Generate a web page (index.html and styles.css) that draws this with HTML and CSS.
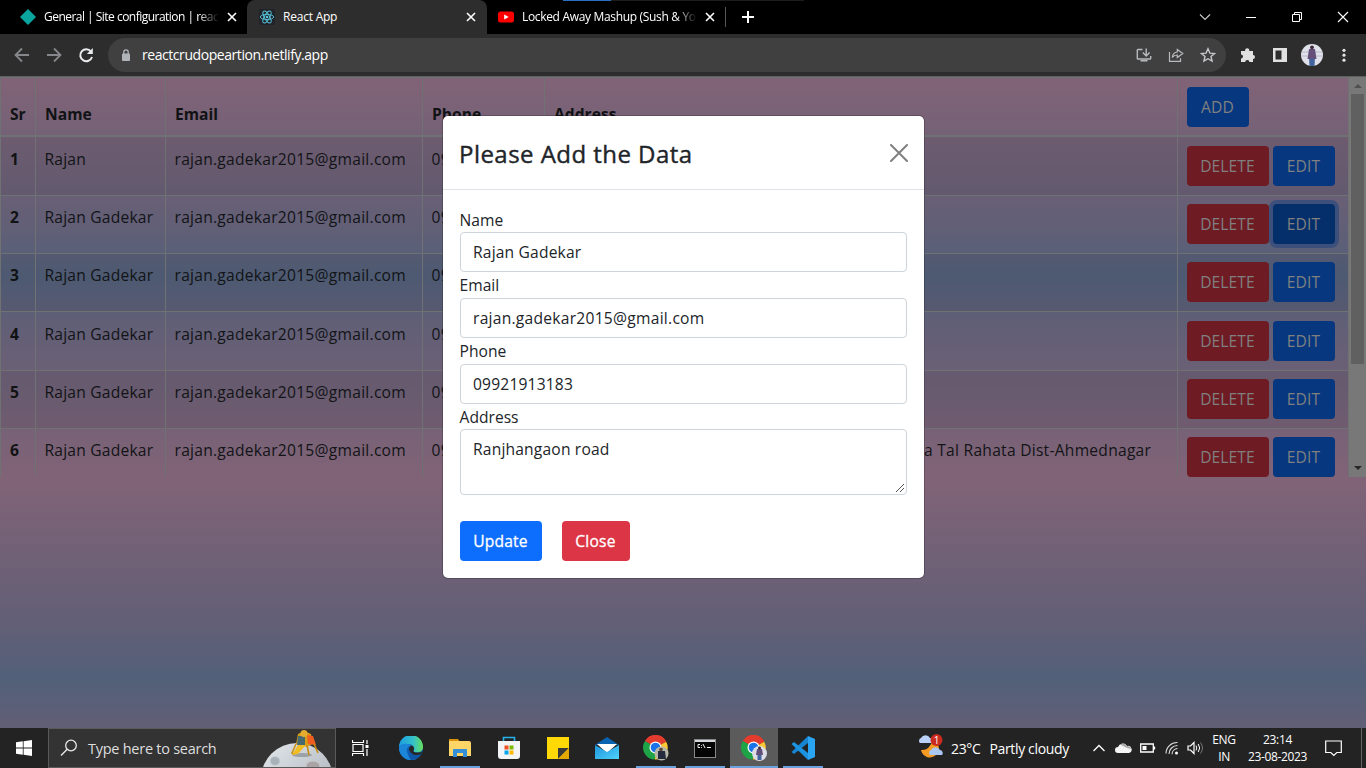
FILE: index.html
```html
<!DOCTYPE html>
<html lang="en">
<head>
<meta charset="utf-8">
<title>React App</title>
<link rel="stylesheet" href="styles.css">
</head>
<body>
<svg class="defs" width="0" height="0">
  <defs>
    <linearGradient id="edgeA" x1="0" y1="0" x2="1" y2="0"><stop offset="0" stop-color="#1b9de2"/><stop offset=".6" stop-color="#35c1c9"/><stop offset="1" stop-color="#66e05a"/></linearGradient>
    <linearGradient id="moon" x1="0" y1="0" x2="1" y2="1"><stop offset="0" stop-color="#e3e8ec"/><stop offset="1" stop-color="#a4abb3"/></linearGradient>
    <linearGradient id="mail" x1="0" y1="0" x2="1" y2="1"><stop offset="0" stop-color="#1d93dc"/><stop offset="1" stop-color="#4fd3fb"/></linearGradient>
  </defs>
  <symbol id="close" viewBox="0 0 10 10"><path d="M1 1l8 8M9 1l-8 8" fill="none" stroke="#fff" stroke-width="1.600"/></symbol>
  <symbol id="chrome" viewBox="0 0 28 26">
    <path d="M12.500 12.500L2 6A12 12 0 0 1 23.200 6.800z" fill="#e33b2e"/>
    <path d="M12.500 12.500L23.200 6.800A12 12 0 0 1 12 24.500z" fill="#fcc934"/>
    <path d="M12.500 12.500L12 24.500A12 12 0 0 1 2 6z" fill="#1ea446"/>
    <path d="M2 6A12 12 0 0 1 23.200 6.800L12.500 7z" fill="#e33b2e"/>
    <circle cx="12.500" cy="12.500" r="6" fill="#fff"/><circle cx="12.500" cy="12.500" r="4.800" fill="#1a73e8"/>
  </symbol>
</svg>

<header class="tabstrip">
  <div class="tab tab-first">
    <svg class="fav" viewBox="0 0 16 16"><path d="M8 0l8 8-8 8-8-8z" fill="#0ba5a0"/></svg>
    <span class="tab-title t1">General | Site configuration | reac</span>
    <svg class="x"><use href="#close"/></svg>
  </div>
  <div class="tab tab-active">
    <svg class="fav" viewBox="0 0 16 16"><rect width="16" height="16" rx="2" fill="#20232a"/><g fill="none" stroke="#58c4dc" stroke-width=".9"><ellipse cx="8" cy="8" rx="6.700" ry="2.600"/><ellipse cx="8" cy="8" rx="6.700" ry="2.600" transform="rotate(60 8 8)"/><ellipse cx="8" cy="8" rx="6.700" ry="2.600" transform="rotate(120 8 8)"/></g><circle cx="8" cy="8" r="1.300" fill="#58c4dc"/></svg>
    <span class="tab-title t2">React App</span>
    <svg class="x"><use href="#close"/></svg>
  </div>
  <div class="tab tab-last">
    <svg class="fav" viewBox="0 0 16 16"><rect y="2.500" width="16" height="11" rx="2.500" fill="#f00"/><path d="M6.200 5.500v5l4.500-2.500z" fill="#fff"/></svg>
    <span class="tab-title t3">Locked Away Mashup (Sush &amp; Yo</span>
    <svg class="x"><use href="#close"/></svg>
  </div>
  <i class="tab-sep"></i>
  <svg class="plus" viewBox="0 0 12 12"><path d="M6 0v12M0 6h12" stroke="#fff" stroke-width="2"/></svg>
  <div class="winctl">
    <svg viewBox="0 0 46 28"><path d="M18 11.500l5 5 5-5" fill="none" stroke="#ccc" stroke-width="1.100"/></svg>
    <svg viewBox="0 0 46 28"><path d="M18 14.500h10" stroke="#fff"/></svg>
    <svg viewBox="0 0 46 28"><path d="M18.500 11.500h7v7h-7zM20.500 11.500v-2h7v7h-2" fill="none" stroke="#fff"/></svg>
    <svg viewBox="0 0 46 28"><path d="M18 9l10 10M28 9L18 19" stroke="#fff" stroke-width="1.100"/></svg>
  </div>
</header>

<nav class="toolbar">
  <div class="navbtns">
    <svg viewBox="0 0 16 16"><path d="M15 8H2M8 1.500L1.500 8 8 14.500" fill="none" stroke="#85878a" stroke-width="1.800"/></svg>
    <svg viewBox="0 0 16 16"><path d="M1 8h13M8 1.500L14.500 8 8 14.500" fill="none" stroke="#85878a" stroke-width="1.800"/></svg>
    <svg viewBox="0 0 16 16"><path d="M13 4.500A6 6 0 1 0 14 10" fill="none" stroke="#e8eaed" stroke-width="2"/><path d="M14.800 1v6h-6z" fill="#e8eaed"/></svg>
  </div>
  <div class="omnibox">
    <svg class="lock" viewBox="0 0 10 12"><rect x="1" y="4.500" width="8" height="7.500" rx="1" fill="#b0b3b8"/><path d="M2.800 5V3a2.200 2.200 0 0 1 4.400 0v2" fill="none" stroke="#b0b3b8" stroke-width="1.300"/></svg>
    <span class="url">reactcrudopeartion.netlify.app</span>
    <div class="omni-icons">
      <svg viewBox="0 0 16 16"><path d="M6.500 2.500H2q-.700 0-.700.700v8q0 .800.700.800h12q.700 0 .700-.800V9M10.200 1.500v7M6.800 5.500l3.400 3.400 3.400-3.400M4.500 13.800h7" fill="none" stroke="#b8babd" stroke-width="1.400"/></svg>
      <svg viewBox="0 0 16 16"><path d="M1.500 5v9.300h11v-3M9.300 2.500l5.500 4-5.500 4V8Q6 8 4.300 10.500 4.800 5.500 9.300 5z" fill="none" stroke="#b8babd" stroke-width="1.200"/></svg>
      <svg viewBox="0 0 16 16"><path d="M8 1.800l1.900 4.300 4.600.4-3.500 3 1.100 4.600L8 11.700l-4.100 2.400L5 9.500l-3.500-3 4.600-.4z" fill="none" stroke="#c4c6c9" stroke-width="1.400"/></svg>
    </div>
  </div>
  <div class="right-icons">
    <svg viewBox="0 0 16 16"><path d="M1 4h4.200a2.100 2.100 0 1 1 4 0H13v4a2 2 0 1 1 0 4v3H9.400a2.100 2.100 0 0 0-4.200 0H1v-3.500a2 2 0 1 0 0-4z" fill="#e1e1e1"/></svg>
    <svg viewBox="0 0 16 16"><path d="M1 1h14v14H1zM3.500 3.500v9h6v-9z" fill="#e1e1e1" fill-rule="evenodd"/></svg>
    <svg class="avatar" viewBox="0 0 22 22"><circle cx="11" cy="11" r="11" fill="#dfe0ea"/><path d="M1 8h20M0 12h22" stroke="#b8bac8"/><path d="M8 14h6l-.5 8h-5z" fill="#42639b"/><path d="M8 5h6l1.500 10h-9z" fill="#674f7b"/><circle cx="11" cy="3.300" r="1.900" fill="#3b2c38"/></svg>
    <svg viewBox="0 0 16 16"><g fill="#e1e1e1"><circle cx="8" cy="3.300" r="1.600"/><circle cx="8" cy="8.200" r="1.600"/><circle cx="8" cy="13.200" r="1.600"/></g></svg>
  </div>
</nav>

<main class="page">
  <section class="scroller">
    <div class="table">
      <div class="row head"><b>Sr</b><b>Name</b><b>Email</b><b>Phone</b><b>Address</b><div class="actions"><button class="btn blue">ADD</button></div></div>
      <div class="row odd first"><b>1</b><span>Rajan</span><span class="mail">rajan.gadekar2015@gmail.com</span><span>09921913183</span><span></span><div class="actions"><button class="btn red">DELETE</button><button class="btn blue">EDIT</button></div></div>
      <div class="row"><b>2</b><span>Rajan Gadekar</span><span class="mail">rajan.gadekar2015@gmail.com</span><span>09921913183</span><span></span><div class="actions"><button class="btn red">DELETE</button><button class="btn blue focused">EDIT</button></div></div>
      <div class="row odd"><b>3</b><span>Rajan Gadekar</span><span class="mail">rajan.gadekar2015@gmail.com</span><span>09921913183</span><span></span><div class="actions"><button class="btn red">DELETE</button><button class="btn blue">EDIT</button></div></div>
      <div class="row"><b>4</b><span>Rajan Gadekar</span><span class="mail">rajan.gadekar2015@gmail.com</span><span>09921913183</span><span></span><div class="actions"><button class="btn red">DELETE</button><button class="btn blue">EDIT</button></div></div>
      <div class="row odd"><b>5</b><span>Rajan Gadekar</span><span class="mail">rajan.gadekar2015@gmail.com</span><span>09921913183</span><span></span><div class="actions"><button class="btn red">DELETE</button><button class="btn blue">EDIT</button></div></div>
      <div class="row"><b>6</b><span>Rajan Gadekar</span><span class="mail">rajan.gadekar2015@gmail.com</span><span>09921913183</span><span class="addr">a Tal Rahata Dist-Ahmednagar</span><div class="actions"><button class="btn red">DELETE</button><button class="btn blue">EDIT</button></div></div>
    </div>
    <div class="scrollbar"><i class="up"></i><i class="thumb"></i><i class="down"></i></div>
  </section>

  <form class="modal">
    <div class="modal-head"><h4>Please Add the Data</h4>
      <svg viewBox="0 0 18 18"><path d="M1 1l16 16M17 1L1 17" stroke="#808080" stroke-width="2" stroke-linecap="round"/></svg>
    </div>
    <div class="modal-body">
      <label class="tight">Name</label><div class="input">Rajan Gadekar</div>
      <label>Email</label><div class="input mail">rajan.gadekar2015@gmail.com</div>
      <label>Phone</label><div class="input">09921913183</div>
      <label class="tight">Address</label><div class="input area">Ranjhangaon road<svg viewBox="0 0 10 10"><path d="M1 9L9 1M5 9l4-4" stroke="#555" stroke-width="1"/></svg></div>
      <div class="modal-btns"><button type="button" class="update">Update</button><button type="button" class="shut">Close</button></div>
    </div>
  </form>
</main>

<footer class="taskbar">
  <div class="start"><svg viewBox="0 0 16 16"><path d="M0 2.300l6.800-1v6.300H0zM7.600 1.200L16 0v7.600H7.600zM0 8.400h6.800v6.300l-6.800-1zM7.600 8.400H16V16l-8.400-1.200z" fill="#fff"/></svg></div>
  <div class="search">
    <svg class="mag" viewBox="0 0 18 18"><circle cx="11" cy="6.500" r="5.300" fill="none" stroke="#e8e8e8" stroke-width="1.300"/><path d="M7.200 10.300L1 16.500" stroke="#e8e8e8" stroke-width="1.400"/></svg>
    <span>Type here to search</span>
    <svg class="moon" viewBox="0 0 70 38"><circle cx="35" cy="50" r="36" fill="url(#moon)"/><ellipse cx="13" cy="32" rx="5" ry="4.500" fill="#a9b1b9" stroke="#cdd3d8"/><ellipse cx="51" cy="37" rx="7" ry="5" fill="#a9a3a5" stroke="#c9cacd"/><ellipse cx="40" cy="26" rx="10" ry="2" fill="#9ba1a7"/><path d="M36 5l6-3 7 3 1 10-5 3-11-3z" fill="#d99c17"/><path d="M36 7h7v9h-8z" fill="#466a6e"/><path d="M45 6l6 1 3 9-8-1z" fill="#ef5e1e"/><path d="M34 15l-4 9 3 1M45 16l2 10M52 15l4 9" fill="none" stroke="#c98f14" stroke-width="1.600"/><path d="M36 16h8l-8 9-6 1z" fill="#f1bd25"/><circle cx="42" cy="4.500" r="3.500" fill="#e5ac32"/></svg>
  </div>
  <div class="slot taskview"><svg width="18" height="16" viewBox="0 0 18 16"><path d="M1 4.500h10v7H1zM.5 0v2.500h11V0M.5 16v-2.500h11V16M15 0v4M15 9v7" fill="none" stroke="#fff" stroke-width="1.200"/><path d="M13.500 5h3v3h-3z" fill="#fff"/></svg></div>
  <div class="slot"><svg width="24" height="24" viewBox="0 0 24 24"><circle cx="12" cy="12" r="12" fill="#0f5fb4"/><path d="M0 11A12 12 0 0 1 24 11c0 4-3 5.500-6 5.500-4 0-4-1-3-2.500 1-3-2-6-6-6-5 0-8 1-9 3z" fill="url(#edgeA)"/><path d="M0 12c1-4 9-6 13-2-4-1-6 3-5 6 1 4 5 7 9 7A12 12 0 0 1 0 12z" fill="#1b86d8"/><path d="M12 9.500c2 0 3.500 2 3 3.500-1 2-1 3.500 3 3.500 3 0 4-.5 5-1l-1 3c-4 2-9 1.500-11-1.500-2-3-1-6 1-7.500z" fill="#262626"/><path d="M10.500 14c1 4 6 6.500 11.500 4-2 4-6 6-10 6-3-3-3-7-1.500-10z" fill="#0f56a8"/></svg></div>
  <div class="slot run"><svg width="22" height="20" viewBox="0 0 22 20"><path d="M0 1h9l2 3H0z" fill="#d9930d"/><path d="M0 3h20q2 0 2 2v13H0z" fill="#ffd567"/><path d="M4 19v-7q0-1 1-1h12q1 0 1 1v7h-4v-4H8v4z" fill="#348ed8"/></svg></div>
  <div class="slot"><svg width="24" height="24" viewBox="0 0 24 24"><path d="M6.500 6V1.500h11V6" fill="none" stroke="#25b2ea" stroke-width="1.600"/><path d="M1 5h22v15q0 3-3 3H4q-3 0-3-3z" fill="#f3f4f5"/><path d="M7.500 9.500h4v4h-4z" fill="#ef5022"/><path d="M12.500 9.500h4v4h-4z" fill="#7fb900"/><path d="M7.500 14.500h4v4h-4z" fill="#01a4ef"/><path d="M12.500 14.500h4v4h-4z" fill="#ffb901"/></svg></div>
  <div class="slot"><svg width="22" height="22" viewBox="0 0 22 22"><path d="M0 0h22v22H0z" fill="#ffd808"/><path d="M11 22V11h11z" fill="#393939"/><path d="M22 11v11H11z" fill="#e5a800"/></svg></div>
  <div class="slot"><svg width="24" height="22" viewBox="0 0 24 22"><path d="M0 8L12 0l12 8z" fill="#0a63b1"/><path d="M2 7h20l-10 9z" fill="#fff"/><path d="M0 8l12 7 12-7v14H0z" fill="url(#mail)"/></svg></div>
  <div class="slot run"><svg width="28" height="26" viewBox="-1 0 28 26"><use href="#chrome" width="28" height="26"/><circle cx="18.500" cy="18.500" r="7" fill="#b6b7a6"/><path d="M15 16h7l1 8h-8z" fill="#252b3f"/><circle cx="18" cy="14.500" r="1.800" fill="#574136"/></svg></div>
  <div class="slot run"><svg width="22" height="19" viewBox="0 0 22 19"><rect x=".5" y=".5" width="21" height="18" fill="#050505" stroke="#888"/><path d="M1 1h20v2H1z" fill="#d5d8dc"/><path d="M6 5.500H4v3h2M7.500 6v.8M7.500 8v.8M9 5l2 4M13 8.500h4" fill="none" stroke="#eee"/></svg></div>
  <div class="slot run current"><svg width="28" height="26" viewBox="-1 0 28 26"><use href="#chrome" width="28" height="26"/><circle cx="18.500" cy="18.500" r="7.500" fill="#dcdde7"/><path d="M16 14h5l1 6h-7z" fill="#634e79"/><path d="M16.500 20h4v5h-4z" fill="#42639b"/><circle cx="18.500" cy="13" r="1.500" fill="#3b2c38"/></svg></div>
  <div class="slot run"><svg width="24" height="24" viewBox="0 0 24 24"><path d="M17 0l7 3v18l-7 3z" fill="#2aa5f2"/><path d="M17 0v7L3 18l-2.500-2z" fill="#1684d1"/><path d="M17 24v-7L3 6 .5 8z" fill="#1a93e0"/></svg></div>
  <div class="weather">
    <svg width="26" height="24" viewBox="0 0 26 24"><path d="M15 6a9 9 0 1 1-12 10q8 1 12-10z" fill="#f59a23"/><path d="M2 9a3 3 0 0 1 1-5 5 5 0 0 1 9 0 3 3 0 0 1 2 5z" fill="#b9d1f6"/><path d="M12 21a3 3 0 0 1 1-5 5 5 0 0 1 9 0 3 3 0 0 1 2 5z" fill="#a9c7f2"/><circle cx="18.500" cy="6" r="6" fill="#c92b1f"/><text x="18.500" y="9.800" text-anchor="middle">1</text></svg>
    <span class="deg">23°C</span><span>Partly cloudy</span>
  </div>
  <div class="tray">
    <svg width="14" height="14" viewBox="0 0 14 14"><path d="M1.500 10L7 4.500l5.500 5.500" fill="none" stroke="#fff" stroke-width="1.300"/></svg>
    <svg width="17" height="14" viewBox="0 0 17 14"><path d="M3 12a3 3 0 0 1 0-6 5 5 0 0 1 9-1 3.500 3.500 0 0 1 2 7z" fill="#f5f5f5"/><path d="M5 3.500Q9 1 12 5q4 0 4 3l-4-1z" fill="#aaa"/></svg>
    <svg width="16" height="10" viewBox="0 0 16 10"><path d="M.7 1h12.600v8H.7zM14.500 3.500v3" fill="none" stroke="#fff" stroke-width="1.300"/><path d="M2.500 3h4v4h-4z" fill="#fff"/></svg>
    <svg width="14" height="14" viewBox="0 0 14 14"><g fill="none" stroke="#ddd" stroke-width="1.100"><path d="M1 12.500A11 11 0 0 1 12.500 1.500M4 13A8.500 8.500 0 0 1 12.500 4.500M7 13.300A6 6 0 0 1 12.500 7.500"/></g><circle cx="11.500" cy="12" r="1.500" fill="#fff"/></svg>
    <svg width="17" height="14" viewBox="0 0 17 14"><path d="M1 5h2.500L7 1.500v11L3.500 9H1z" fill="none" stroke="#fff" stroke-width="1.200"/><path d="M9 4.500q1.500 2.500 0 5M11.200 3q3 4 0 8" fill="none" stroke="#fff"/><path d="M13.500 1.500q4 5.500 0 11" fill="none" stroke="#777"/></svg>
  </div>
  <div class="lang"><span>ENG</span><span>IN</span></div>
  <div class="clock"><span>23:14</span><span>23-08-2023</span></div>
  <svg class="notif" viewBox="0 0 17 17"><path d="M.7 1h15.600v11.500h-4.500l-3 3-3-3H.7z" fill="none" stroke="#fff" stroke-width="1.200"/></svg>
  <i class="desk"></i>
</footer>
</body>
</html>
```
FILE: styles.css
```css
* { box-sizing: border-box; }
body {
  margin: 0;
  width: 1366px;
  height: 768px;
  overflow: hidden;
  display: flex;
  flex-direction: column;
  font-family: "Open Sans", "Noto Sans", sans-serif;
}
svg { display: block; flex: none; }
.defs { position: absolute; }

/* Browser tabs */
.tabstrip {
  height: 34px;
  background: linear-gradient(90deg, #2a6fc0 0 48px, #1c1c1c 0) 563px 0 / 241px 1px no-repeat #000;
  display: flex;
  align-items: center;
  color: #fff;
  font-size: 12px;
  flex: none;
}
.tab { height: 34px; display: flex; align-items: center; flex: none; }
.tab-first { width: 247px; padding-left: 20px; }
.tab-active { width: 240px; padding-left: 12px; background: #2d2d2d; border-radius: 8px 8px 0 0; }
.tab-last { width: 238px; padding-left: 11px; }
.fav { width: 16px; height: 16px; margin-right: 8px; }
.tab-title { width: 175px; white-space: nowrap; margin-right: 8px; padding-bottom: 1px; }
.t1 { letter-spacing: -.52px; }
.t2 { letter-spacing: -.22px; width: 183px; margin-right: 0; }
.t3 { letter-spacing: -.33px; }
.t1, .t3 { -webkit-mask-image: linear-gradient(90deg, #000 88%, transparent); mask-image: linear-gradient(90deg, #000 88%, transparent); }
.x { width: 10px; height: 10px; }
.tab-sep { width: 1px; height: 20px; background: #555; }
.plus { width: 12px; height: 12px; margin-left: 16px; }
.winctl { display: flex; margin-left: auto; }
.winctl svg { width: 46px; height: 28px; }

/* Address bar */
.toolbar {
  height: 43px;
  flex: none;
  background: #2d2d2d;
  border-bottom: 1px solid #606060;
  display: flex;
  align-items: center;
}
.navbtns { display: flex; gap: 16px; width: 108px; padding-left: 14px; }
.navbtns svg, .omni-icons svg, .right-icons svg { width: 16px; height: 16px; }
.omnibox {
  width: 1118px;
  height: 34px;
  border-radius: 17px;
  background: #404040;
  color: #fff;
  display: flex;
  align-items: center;
  padding: 0 10px 0 13px;
}
.lock { width: 10px; height: 12px; margin-right: 11px; }
.url { font-size: 14px; letter-spacing: -.44px; padding-bottom: 1px; }
.omni-icons { display: flex; gap: 16px; margin-left: auto; }
.right-icons { display: flex; gap: 16px; align-items: center; padding-left: 14px; }
.right-icons .avatar { width: 22px; height: 22px; margin: 0 -3px; }

/* Page */
.page {
  height: 651px;
  flex: none;
  position: relative;
  background: linear-gradient(#816377, #635f76 36%, #526079 50%, #635f76 64%, #816377) 0 0 / 100% 400px;
  color: #121416;
  font-size: 15.6px;
}
.scroller { height: 400px; display: flex; overflow: hidden; }
.table { width: 1349px; border-left: 1px solid #6f7173; border-top: 1px solid #6f7173; }
.row {
  display: grid;
  grid-template-columns: 35px 130px 257px 122px 633px 171px;
  height: 58.2px;
  border-bottom: 1px solid #6f7173;
  line-height: 25px;
}
.row > * { border-right: 1px solid #6f7173; padding: 9.200px 0 0 8.500px; white-space: nowrap; letter-spacing: .21px; }
.row b { letter-spacing: .02px; color: #101214; padding-left: 9px; }
.row.first { height: 59px; }
.row.first > * { padding-top: 10px; }
.row.head { height: 59px; border-bottom-width: 2px; }
.row.head b { padding-top: 24px; }
.odd { background: rgba(0, 0, 0, .055); }
.row .mail, .modal .mail { letter-spacing: .26px; }
.row .addr { padding-left: 379px; letter-spacing: .26px; }
.row .actions { display: flex; gap: 4px; padding: 8.200px 0 0 9px; }
.row.first .actions, .row.head .actions { padding-top: 9px; }
.btn {
  height: 40px;
  border: 0;
  border-radius: 4px;
  padding: 0 1px 0 0;
  font: 15.6px "Open Sans", sans-serif;
  letter-spacing: .1px;
  color: #808080;
}
.red { width: 82px; background: #6e1b23; }
.blue { width: 62px; background: #06377f; }
.focused { background: #052f6b; box-shadow: 0 0 0 4px #3d507c; }
.scrollbar { width: 17px; background: #787878; display: flex; flex-direction: column; align-items: center; }
.up, .down { border: 4px solid transparent; }
.up { border-bottom-color: #505050; border-top: 0; margin-top: 7px; }
.thumb { width: 13px; height: 270px; background: #606060; margin-top: 6px; }
.down { border-top-color: #282828; border-bottom: 0; margin-top: 102px; }

/* Dialog */
.modal {
  position: absolute;
  left: 443px;
  top: 39px;
  width: 481px;
  height: 462px;
  background: #fff;
  border-radius: 5px;
  box-shadow: 0 0 0 1px rgba(0, 0, 0, .2);
  color: #212529;
}
.modal-head { height: 74px; border-bottom: 1px solid #dee2e6; display: flex; justify-content: space-between; padding: 20px 16px 0; }
.modal-head h4 { margin: 0; font-size: 24px; line-height: 36px; font-weight: 500; letter-spacing: .46px; -webkit-text-stroke: .4px #212529; }
.modal-head svg { width: 18px; height: 18px; margin-top: 8px; }
.modal-body { padding: 17px; display: flex; flex-direction: column; }
.modal-body label { height: 26px; line-height: 26px; letter-spacing: .02px; margin-left: -.5px; }
.modal-body .tight { height: 25px; }
.input {
  height: 40px;
  border: 1px solid #ced4da;
  border-radius: 4px;
  padding: 0 12px;
  line-height: 38px;
  letter-spacing: .18px;
}
.area { height: 66px; position: relative; line-height: 39px; }
.area svg { position: absolute; right: 1px; bottom: 1px; width: 10px; height: 10px; }
.modal-btns { display: flex; gap: 20px; margin-top: 26px; }
.modal-btns button { height: 40px; padding: 0 1px 0 0; border: 0; border-radius: 4px; color: #fff; font: 500 15.6px "Open Sans", sans-serif; letter-spacing: .2px; -webkit-text-stroke: .3px #fff; }
.modal-btns .update { width: 82px; background: #0d6efd; }
.modal-btns .shut { width: 68px; background: #dc3545; }

/* Taskbar */
.taskbar { height: 40px; flex: none; background: #232323; display: flex; color: #fff; align-items: center; }
.start { width: 48px; padding-left: 16px; }
.start svg { width: 16px; height: 16px; }
.search { width: 288px; height: 40px; background: #333; border: 1px solid #5a5a5a; display: flex; align-items: center; padding-left: 11px; }
.mag { width: 18px; height: 18px; margin-right: 10px; }
.search span { font-size: 14.500px; color: #dedede; width: 174px; letter-spacing: -.26px; white-space: nowrap; }
.moon { width: 70px; height: 38px; }
.slot { width: 49px; height: 40px; display: flex; align-items: center; justify-content: center; }
.taskview { width: 50px; }
.run { background: linear-gradient(#6ba1dc, #6ba1dc) center bottom / 40px 2px no-repeat; }
.current { background: linear-gradient(#6ba1dc, #6ba1dc) center bottom / 48px 2px no-repeat, linear-gradient(#5b5b5b, #5b5b5b) center / 48px 40px no-repeat; }
.weather { margin-left: 91px; display: flex; align-items: center; width: 174px; font-size: 14px; letter-spacing: -.35px; white-space: nowrap; }
.weather svg { margin-right: 7px; margin-top: -4px; }
.weather text { font: 10px "Open Sans", sans-serif; fill: #fff; }
.deg { margin-right: 9px; }
.tray { display: flex; gap: 8.500px; align-items: center; width: 114px; }
.lang, .clock { display: flex; flex-direction: column; align-items: center; font-size: 12px; line-height: 17px; letter-spacing: -.35px; }
.lang { width: 36px; }
.clock { width: 71px; }
.notif { width: 17px; height: 17px; margin-left: 12px; }
.desk { width: 1px; height: 40px; background: #666; margin-left: 19px; }
```
